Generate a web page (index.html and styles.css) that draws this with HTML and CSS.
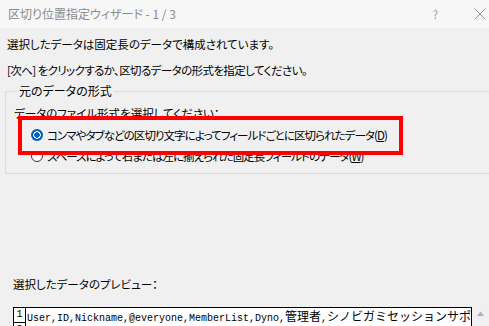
FILE: index.html
```html
<!DOCTYPE html>
<html lang="ja">

<head>
   <meta charset="UTF-8">
   <meta name="viewport" content="width=device-width, initial-scale=1.0">
   <title>区切り位置指定ウィザード</title>
   <link rel="stylesheet" href="styles.css">
</head>

<body>
   <div class="dialog">
      <header class="titlebar">
         <div class="title">区切り位置指定ウィザード - 1 / 3</div>
         <div class="title-buttons">
            <span class="help">?</span>
            <svg class="close" width="12" height="12" viewBox="0 0 12 12">
               <path d="M0.5 0.5 L11.5 11.5 M11.5 0.5 L0.5 11.5" stroke="#999" stroke-width="1" fill="none" />
            </svg>
         </div>
      </header>
      <main class="content">
         <p class="msg">選択したデータは固定長のデータで構成されています。</p>
         <p class="msg msg-tight">[次へ] をクリックするか、区切るデータの形式を指定してください。</p>

         <fieldset class="group">
            <legend>元のデータの形式</legend>
            <div class="prompt">データのファイル形式を選択してください：</div>
            <div class="options">
               <label class="radio checked highlight">
                  <span class="dot"></span>
                  <span class="label">コンマやタブなどの区切り文字によってフィールドごとに区切られたデータ(<u>D</u>)</span>
               </label>
               <label class="radio second">
                  <span class="dot"></span>
                  <span class="label">スペースによって右または左に揃えられた固定長フィールドのデータ(<u>W</u>)</span>
               </label>
            </div>
         </fieldset>

         <div class="preview-label">選択したデータのプレビュー：</div>
         <div class="preview-row">
            <div class="preview">
               <div class="line">
                  <span class="num">1</span>
                  <span class="data">User,ID,Nickname,@everyone,MemberList,Dyno,<span class="wide">管理者</span>,<span class="wide">シノビガミセッションサポート</span></span>
               </div>
               <div class="line">
                  <span class="num">2</span>
                  <span class="data"></span>
               </div>
            </div>
            <svg class="scroll-up" width="7" height="5" viewBox="0 0 7 5">
               <path d="M0 5 L3.5 0.5 L7 5 Z" fill="#b0b0b0" />
            </svg>
         </div>
      </main>
   </div>
</body>

</html>
```

FILE: styles.css
```css
* {
   margin: 0;
   padding: 0;
   box-sizing: border-box;
}

body {
   font-family: 'Noto Sans CJK JP', 'Noto Sans', sans-serif;
   font-size: 11.5px;
   font-feature-settings: 'palt';
   color: #000;
   background: #f0f0f0;
   overflow: hidden;
}

.dialog {
   width: 489px;
   height: 326px;
   display: flex;
   flex-direction: column;
}

.titlebar {
   height: 28px;
   flex: none;
   background: #f7f7f7;
   display: flex;
   align-items: center;
   justify-content: space-between;
   padding: 0 3px 1px 8px;
}

.title {
   color: #8a8a8a;
   font-size: 12px;
}

.title-buttons {
   display: flex;
   align-items: center;
   gap: 36px;
}

.help {
   color: #999;
   font-size: 11px;
}

.content {
   padding: 6px 0 0 7px;
}

.msg {
   line-height: 20px;
   margin-bottom: 6px;
   white-space: nowrap;
}

.msg-tight {
   letter-spacing: -0.6px;
   margin-bottom: 3px;
}

.group {
   border: 1px solid #dcdcdc;
   border-right: none;
   margin: 0 0 0 -2px;
   padding: 6px 0 0 8px;
   height: 91px;
}

.group legend {
   padding: 0 2px;
   margin-left: 3px;
   line-height: 16px;
   font-size: 12px;
}

.prompt {
   line-height: 16px;
   white-space: nowrap;
}

.options {
   display: flex;
   flex-direction: column;
}

.radio {
   display: flex;
   align-items: center;
   gap: 4px;
   height: 22px;
   padding-left: 17px;
   white-space: nowrap;
}

.radio .label {
   letter-spacing: -0.95px;
}

.radio .dot {
   width: 12px;
   height: 12px;
   border-radius: 50%;
   border: 1px solid #333;
   background: #fff;
   flex: none;
}

.radio.checked .dot {
   border: none;
   background: radial-gradient(circle, #0060c0 0 2.5px, #fff 3px 3.5px, #0060c0 4px);
}

.highlight {
   position: relative;
   z-index: 1;
   outline: 4px solid #ff0000;
   margin: -1px 0 0 8px;
   width: 377px;
   height: 31px;
   padding: 0 0 1px 9px;
   background: #f0f0f0;
}

.second {
   margin-top: -6px;
}

.preview-label {
   margin-top: 102px;
   margin-left: 6px;
   line-height: 16px;
}

.preview-row {
   display: flex;
   align-items: flex-start;
   gap: 5px;
   margin-top: 15px;
   margin-left: 6px;
}

.preview {
   width: 459px;
   height: 30px;
   border: 1px solid #000;
   border-bottom: none;
   background: #fff;
   overflow: hidden;
}

.line {
   display: flex;
   height: 15px;
   white-space: nowrap;
}

.num {
   width: 12px;
   border-right: 1px solid #000;
   border-bottom: 1px solid #000;
   font-family: 'Liberation Mono', monospace;
   font-size: 10px;
   line-height: 14px;
   text-align: center;
   flex: none;
}

.data {
   font-family: 'Liberation Mono', monospace;
   font-size: 10px;
   line-height: 15px;
   padding-left: 1px;
}

.data .wide {
   font-family: 'Noto Sans CJK JP', sans-serif;
   font-feature-settings: normal;
   font-size: 12px;
}

.scroll-up {
   margin-top: 4px;
}
```
